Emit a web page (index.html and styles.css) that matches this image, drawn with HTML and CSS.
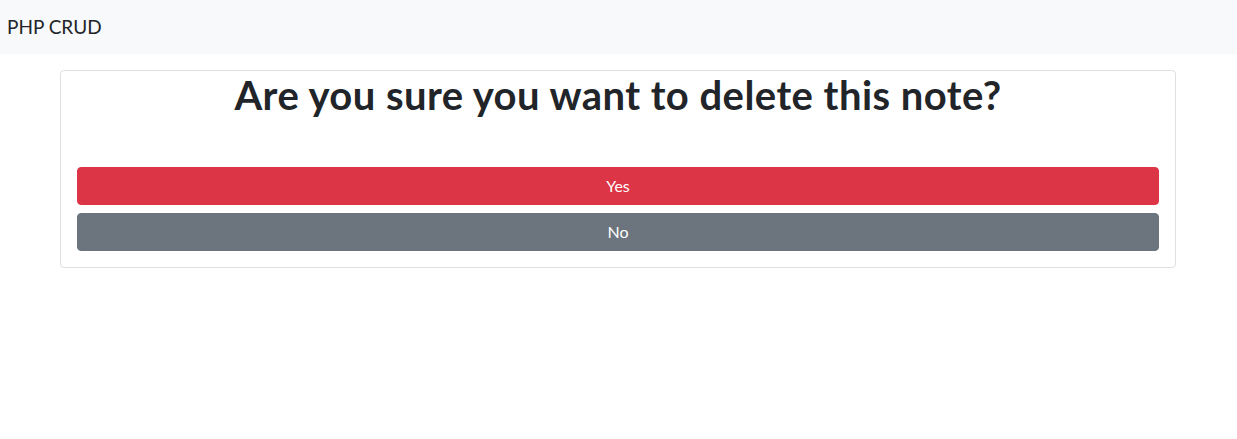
FILE: index.html
```html
<!DOCTYPE html>
<html lang="en">
<head>
<meta charset="utf-8">
<title>PHP CRUD</title>
<link rel="stylesheet" href="styles.css">
</head>
<body>
<nav class="navbar">
  <a class="brand" href="#">PHP CRUD</a>
</nav>
<main class="container">
  <div class="card">
    <h1 class="title">Are you sure you want to delete this note?</h1>
    <form class="actions">
      <button type="button" class="btn btn-danger">Yes</button>
      <button type="button" class="btn btn-secondary">No</button>
    </form>
  </div>
</main>
</body>
</html>
```
FILE: styles.css
```css
* { box-sizing: border-box; }
html, body { margin: 0; padding: 0; }
body {
  font-family: Lato, "Open Sans", sans-serif;
  color: #212529;
  background: #fff;
  font-size: 16px;
  line-height: 1.5;
}
.navbar {
  background: #f8f9fa;
  height: 54px;
  display: flex;
  align-items: center;
  padding: 0 7px;
}
.brand {
  font-size: 19px;
  color: #212529;
  text-decoration: none;
  line-height: 30px;
}
.container {
  width: 1140px;
  margin: 16px 0 0 48px;
  padding: 0 12px;
}
.card {
  border: 1px solid rgba(0,0,0,.125);
  border-radius: 4px;
  padding: 0 16px 16px;
}
.title {
  margin: 0 0 48px;
  font-size: 40px;
  font-weight: 700;
  letter-spacing: 0.45px;
  line-height: 1.2;
  text-align: center;
  color: #212529;
}
.actions {
  display: flex;
  flex-direction: column;
  gap: 8px;
}
.btn {
  display: block;
  width: 100%;
  height: 38px;
  border: 1px solid transparent;
  border-radius: 4px;
  color: #fff;
  font-family: inherit;
  font-size: 16px;
  line-height: 1.5;
  padding: 6px 12px;
  cursor: pointer;
}
.btn-danger { background: #dc3545; border-color: #dc3545; }
.btn-secondary { background: #6c757d; border-color: #6c757d; }
```
